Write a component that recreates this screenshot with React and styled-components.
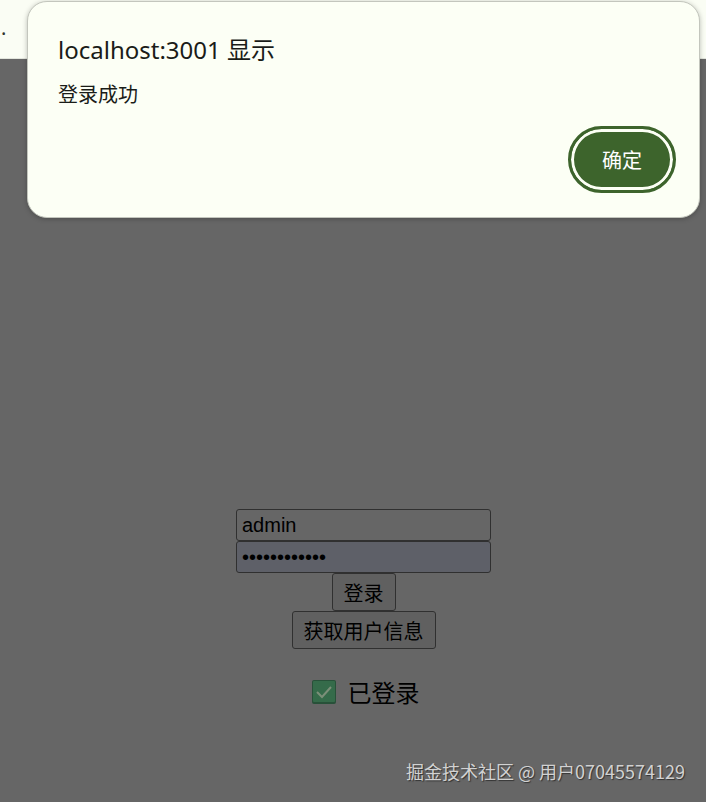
import React, { useState } from "react";
import styled, { createGlobalStyle } from "styled-components";

const GlobalStyle = createGlobalStyle`
  *, *::before, *::after { box-sizing: border-box; }
  body {
    margin: 0;
    background: #666666;
    font-family: "Noto Sans", "Noto Sans CJK SC", sans-serif;
  }
`;

const Screen = styled.div`
  position: relative;
  display: flex;
  flex-direction: column;
  min-height: 100vh;
  overflow: hidden;
`;

const BrowserBar = styled.header`
  height: 59px;
  padding: 16px 0 0 1px;
  background: #fafdf4;
  border-bottom: 1px solid #e2e5dc;
  color: #30332c;
  font-size: 20px;
  line-height: 24px;
`;

const Page = styled.main`
  flex: 1;
  display: flex;
  flex-direction: column;
  align-items: center;
  padding: 450px 0 19px 21px;
  color: #000000;
`;

const LoginForm = styled.form`
  display: flex;
  flex-direction: column;
  align-items: center;
`;

const TextField = styled.input`
  width: 255px;
  height: 32px;
  padding: 0 5px;
  border: 1px solid #303030;
  border-radius: 3px;
  outline: none;
  background: ${({ $filled }) => ($filled ? "#5e6068" : "#666666")};
  color: #000000;
  font: 20px "Liberation Sans", Arial, sans-serif;
`;

const PageButton = styled.button`
  height: 38px;
  padding: 2px 11px 0;
  border: 1px solid #303030;
  border-radius: 3px;
  background: #606060;
  color: #000000;
  font: 20px/30px "Noto Sans CJK SC", sans-serif;
`;

const Status = styled.p`
  display: flex;
  align-items: center;
  gap: 11px;
  margin: 25px 0 0;
  padding-left: 3px;
  font: 24px/36px "Noto Sans CJK SC", sans-serif;
`;

const Watermark = styled.footer`
  margin: auto 21px 0 0;
  align-self: flex-end;
  color: #d2d2d2;
  font: 18px/24px "Noto Sans CJK SC", sans-serif;
  text-shadow: 1px 1px 1px #333333;
`;

const AlertPanel = styled.section`
  position: absolute;
  top: 1px;
  left: 27px;
  right: 6px;
  display: flex;
  flex-direction: column;
  padding: 32px 23px 24px 30px;
  border: 1px solid #c3c6bd;
  border-radius: 20px;
  background: #fcfff5;
  color: #1a1c18;
  box-shadow: 0 1px 5px rgba(0, 0, 0, 0.25);
`;

const AlertTitle = styled.h1`
  margin: 0;
  font-size: 24px;
  font-weight: 400;
  line-height: 32px;
`;

const AlertMessage = styled.p`
  margin: 14px 0 0;
  font-size: 20px;
  line-height: 30px;
`;

const ConfirmButton = styled.button`
  align-self: flex-end;
  width: 108px;
  height: 67px;
  margin-top: 16px;
  padding: 0;
  border: 3px solid #3d642c;
  border-radius: 34px;
  outline: none;
  background: #3d642c;
  box-shadow: inset 0 0 0 3px #fcfff5;
  color: #ffffff;
  font: 20px/30px "Noto Sans CJK SC", sans-serif;
`;

function CheckIcon() {
  return (
    <svg width="26" height="26" viewBox="0 0 26 26" aria-hidden="true">
      <rect x="1" y="1" width="24" height="24" rx="2" fill="#285139" />
      <rect x="2" y="2" width="22" height="21" rx="1" fill="#356b4a" />
      <path d="M6 13l5 5L20 8" fill="none" stroke="#7b8f79" strokeWidth="2" />
    </svg>
  );
}

export default function App() {
  const [alertOpen, setAlertOpen] = useState(true);
  return (
    <Screen>
      <GlobalStyle />
      <BrowserBar>.</BrowserBar>
      <Page>
        <LoginForm onSubmit={(event) => { event.preventDefault(); setAlertOpen(true); }}>
          <TextField aria-label="用户名" defaultValue="admin" />
          <TextField aria-label="密码" type="password" defaultValue="password1234" $filled />
          <PageButton type="submit">登录</PageButton>
          <PageButton type="button">获取用户信息</PageButton>
        </LoginForm>
        <Status><CheckIcon />已登录</Status>
        <Watermark>掘金技术社区 @ 用户07045574129</Watermark>
      </Page>
      {alertOpen && (
        <AlertPanel role="alertdialog" aria-labelledby="alert-title" aria-describedby="alert-message">
          <AlertTitle id="alert-title">localhost:3001 显示</AlertTitle>
          <AlertMessage id="alert-message">登录成功</AlertMessage>
          <ConfirmButton type="button" onClick={() => setAlertOpen(false)}>确定</ConfirmButton>
        </AlertPanel>
      )}
    </Screen>
  );
}
